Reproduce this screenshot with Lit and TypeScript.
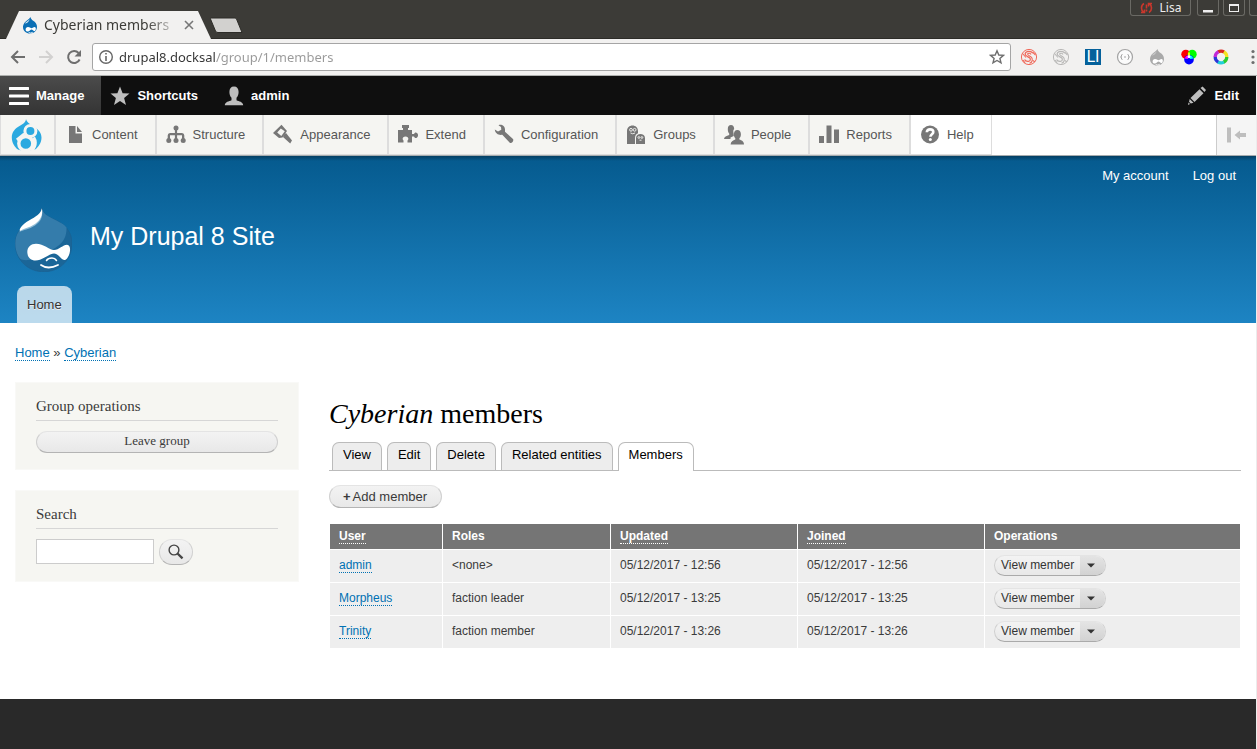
import { LitElement, html, css, svg, nothing } from "lit";
import { customElement, property } from "lit/decorators.js";

const glyph = (w: number, h: number, body: unknown, cls = "") =>
  html`<svg class=${cls} width=${w} height=${h} viewBox="0 0 ${w} ${h}" aria-hidden="true">${body}</svg>`;

const DROP = "M8.4 0C7.6 2 5.6 2.900 4 4.200C2 5.800 1 7.700 1 10C1 13.900 4.200 16.500 8 16.500C12 16.500 15 13.600 15 10C15 7.200 13.500 5.300 11.600 4C10 2.900 8.800 1.800 8.400 0Z";
const GOGGLES = "M3.600 12.400C3.600 11 4.600 10 6 10C7.500 10 8.600 11.200 9.600 11.200C10.600 11.200 11.400 10 12.600 10C13.600 10 14 11 13.800 12.200C13.600 13.400 13 14.200 12.200 14.100C11.200 14 10.600 12.600 9.600 12.600C8.400 12.600 7.400 14.600 5.800 14.600C4.500 14.600 3.600 13.700 3.600 12.400Z";

const favicon = (main: string, top: string) =>
  glyph(16, 17, svg`
    <path d=${DROP} fill=${main} />
    <path d="M7.800 2.200C6.500 3.700 4 4.600 2.900 6.600C4.500 6.500 7 4.900 7.800 2.200Z" fill=${top} />
    <path d=${GOGGLES} fill="#fff" />
    <path d="M6.600 15.400Q8.600 16.600 10.800 15.300" stroke="#fff" stroke-width=".8" fill="none" />`);

const trayIcons: Record<string, unknown> = {
  content: svg`<path d="M4 2H10.500V9.500H17V19H4Z M12 2L17 8H12Z" />`,
  structure: svg`
    <path d="M8.900 5H11.100V9H16Q18.300 9 18.300 11.500V15H16V11.300H11.100V15H8.900V11.300H4V15H1.700V11.500Q1.700 9 4 9H8.900Z" />
    <circle cx="10" cy="4" r="2.500" /><circle cx="2.800" cy="16.600" r="2.500" />
    <circle cx="10" cy="16.600" r="2.500" /><circle cx="17.200" cy="16.600" r="2.500" />`,
  appearance: svg`
    <path fill-rule="evenodd" d="M0 9L8.500 .800L14 7L9.500 13.500L6 14ZM4.200 8.600L8.300 12L11.800 7.300L7.800 4.400Z" />
    <path d="M11 10.500L13 9L19 16.500L17.200 19.500L10 13Z" />`,
  extend: svg`<path d="M0 6H5V4H4V1H11V4H10V6H14V10H16C16.500 8.500 18 8 19 9C20.400 10 20.400 12.500 19 13.500C18 14.500 16.500 14 16 12.500H14V18.500H9.500V16.500C11 15.500 10.600 12.500 7.500 12.500C4.400 12.500 4 15.500 5.500 16.500V18.500H0Z" />`,
  configuration: svg`<path d="M4.500 1.200C7.500 0 11 2 11 5.500V7.800L19 15C20 16.500 18.500 19.500 16 19L8.300 10.800C5 11.500 1.200 9.800 .800 5.500L4 7.600L7.300 5.800L7 3Z" />`,
  groups: svg`
    <path d="M1 20V7C1 3.500 3.500 1.400 6.500 1.400S12 3.500 12 7V9.300C10 10 9 12 9 14V20Z" />
    <path d="M10 20V14C10 11.500 12 10 14.400 10S19 11.500 19 14V20Z" />
    <g fill="none" stroke="#f5f5f2" stroke-width=".9"><circle cx="5" cy="5.800" r="1.400" /><circle cx="8.600" cy="5.800" r="1.400" /><path d="M4.500 9Q6.800 10.600 9 9" /><circle cx="12.900" cy="13.500" r=".9" /><circle cx="15.900" cy="13.500" r=".9" /><path d="M13.500 16.200H15.500" /></g>`,
  people: svg`
    <path d="M3.800 5C3.800 2.500 5 1 7 1S10 2.500 10.200 5C9.300 5.800 9 7 9.600 9.500L9.800 12L6.500 13.500V15H0C.200 12.700 2.500 12 5.200 11V9.500C4.300 8.500 3.800 7 3.800 5Z" />
    <path d="M9.900 10.200C9.900 7.500 11.300 6 13.400 6S16.900 7.500 16.900 10.200C16.900 12 16.300 13.400 15.400 14.200V15.500C17.500 16.500 20 17 20 20.500H6.600C6.800 17.500 9 16.500 11.300 15.500V14.200C10.400 13.400 9.900 12 9.900 10.200Z" />`,
  reports: svg`<path d="M0 12H5V19H0ZM7.500 1.500H12.500V19H7.500ZM15 5.500H20V19H15Z" />`,
  help: svg`
    <circle cx="10" cy="10.500" r="9" />
    <path d="M6.800 8.300C6.800 6.300 8.200 5.400 10 5.400C12 5.400 13.300 6.500 13.300 8.100C13.300 10.300 10.500 10.300 10.400 12.800" fill="none" stroke="#fff" stroke-width="2.600" />
    <circle cx="10.300" cy="15.600" r="1.500" fill="#fff" />`,
};

const cycle = (color: string) => glyph(18, 18, svg`
  <g fill="none" stroke=${color}>
    <circle cx="9" cy="9" r="7.600" stroke-width="1" />
    <path d="M12.800 5.200C11.500 2.700 6 2.600 5.200 5.500C4.600 8 8 8.600 9.500 9.800C11 11 10.500 13 8.500 13.300C6.500 13.500 5 12.600 4.600 11.500" stroke-width="1.200" />
    <path d="M11 6.500C10.500 5 8 4.800 7.600 6C7.300 7.200 9 7.700 10.800 8.800C13.200 10.500 12.800 14.500 9.500 15.300M2.500 5.500L6 9.500M3 12L5 15M12.500 4L15.500 7M13 12.500L15 14" stroke-width="1.100" />
  </g>`);

const extensions: Array<[string, unknown]> = [
  ["Script blocker", cycle("#f0695a")],
  ["Script blocker, inactive", cycle("#b9b8b7")],
  ["LI", html`<span class="li">LI</span>`],
  ["Brackets", glyph(18, 18, svg`
    <circle cx="9" cy="9" r="7.500" fill="#fbfbfb" stroke="#a3a3a3" stroke-width="1.200" />
    <path d="M6.500 6.500Q5 6.500 5.500 8Q5.500 9 4.500 9Q5.500 9 5.500 10Q5 11.500 6.500 11.500M11.500 6.500Q13 6.500 12.500 8Q12.500 9 13.500 9Q12.500 9 12.500 10Q13 11.500 11.500 11.500M8 9H10" fill="none" stroke="#a3a3a3" />`)],
  ["Drupal", favicon("#a9a9a9", "#c9c9c9")],
  ["Colours", glyph(16, 16, svg`
    <circle cx="4.800" cy="5.300" r="4.500" fill="#f00" /><circle cx="11.200" cy="5.300" r="4.500" fill="#0f0" />
    <circle cx="8" cy="10.700" r="4.800" fill="#00f" />
    <path d="M8 2.600Q9.400 4.500 9 6.400L8 7L6.900 6.400Q6.700 4.300 8 2.600Z" fill="#ff0" />
    <path d="M3.600 9.400Q5 6.300 7 6.500L8 8.400L6.600 9.900Z" fill="#f0f" />
    <path d="M12.400 9.400Q11 6.300 9 6.500L8 8.400L9.400 9.900Z" fill="#0ff" /><circle cx="8" cy="7.700" r="1.400" fill="#fff" />`)],
  ["Colour wheel", glyph(16, 16, svg`
    <g fill="none" stroke-width="3.200" stroke-dasharray="6.200 60">
      <circle cx="8" cy="8" r="5.800" stroke="#d9281e" transform="rotate(-120 8 8)" />
      <circle cx="8" cy="8" r="5.800" stroke="#f4e320" transform="rotate(-60 8 8)" />
      <circle cx="8" cy="8" r="5.800" stroke="#2ecc2e" transform="rotate(0 8 8)" />
      <circle cx="8" cy="8" r="5.800" stroke="#20cfd8" transform="rotate(60 8 8)" />
      <circle cx="8" cy="8" r="5.800" stroke="#2b35d8" transform="rotate(120 8 8)" />
      <circle cx="8" cy="8" r="5.800" stroke="#c229d6" transform="rotate(180 8 8)" />
    </g>`)],
];

@customElement("browser-chrome")
export class BrowserChrome extends LitElement {
  @property() title = "";
  @property() url = "";

  static styles = css`
    :host { display: block; font: 15px/20px "Noto Sans", "Open Sans", sans-serif; }
    button { font: inherit; margin: 0; padding: 0; border: 0; background: none; display: flex; align-items: center; justify-content: center; }
    svg { display: block; flex: none; }
    .titlebar { display: flex; align-items: flex-end; height: 38px; background: #3c3b37; border-bottom: 1px solid #2d2c28; }
    .tab { display: flex; align-items: center; box-sizing: border-box; width: 205px; height: 28px; margin: 0 0 -1px 6px; padding: 0 16px 0 16px; background: #f2f1f0; clip-path: polygon(0 100%, 13px 0, calc(100% - 13px) 0, 100% 100%); }
    .label { flex: 1; margin-left: 6px; font-size: 14px; white-space: nowrap; color: #3c3b37; mask-image: linear-gradient(90deg, #000 80%, rgba(0, 0, 0, .25)); }
    .close { width: 12px; margin-left: 11px; }
    .newtab { margin: 0 0 4px -2px; }
    .windows { display: flex; align-self: flex-start; margin-left: auto; height: 16px; color: #eee; }
    .windows button { box-sizing: border-box; border: 1px solid #6a6964; border-top: 0; border-radius: 0 0 3px 3px; width: 22px; margin-right: 4px; color: inherit; }
    .windows .user { width: 61px; gap: 7px; margin-right: 6px; font-size: 12px; line-height: 15px; }
    .windows .edge { width: 8px; margin: 0; border-right: 0; border-radius: 0 0 0 3px; }
    .toolbar { display: flex; align-items: center; height: 36px; background: #f2f1f0; border-bottom: 1px solid #aeb0ae; }
    .nav { display: flex; gap: 8px; padding: 0 8px; }
    .nav button { width: 20px; }
    .omnibox { flex: 1; display: flex; align-items: center; box-sizing: border-box; height: 28px; padding: 0 5px; background: #fff; border: 1px solid #a5a5a5; border-radius: 3px; }
    .omnibox input { flex: 1; min-width: 0; border: 0; padding: 0; margin-left: 5px; outline: 0; font: inherit; font-size: 13px; color: #555; background: linear-gradient(90deg, #333 97px, #999 97px); background-clip: text; -webkit-text-fill-color: transparent; }
    .extensions { display: flex; padding-left: 2px; }
    .extensions button { width: 32px; height: 28px; }
    .extensions .menu { width: 20px; justify-content: flex-end; }
    .li { width: 16px; height: 16px; font: 15px/16px "DejaVu Sans", sans-serif; color: #fff; background: #05619b; }
  `;

  render() {
    return html`
      <div class="titlebar">
        <div class="tab">
          ${favicon("#0a6fb5", "#d5e6f2")}
          <span class="label">${this.title}</span>
          <button class="close" aria-label="Close tab">${glyph(10, 10, svg`<path d="M1 1L9 9M9 1L1 9" stroke="#777" stroke-width="1.600" />`)}</button>
        </div>
        <button class="newtab" aria-label="New tab">${glyph(34, 17, svg`<path d="M2 1H26Q27 1 27.500 2L33 15.500H9Q7 15.500 6.500 14L1.500 2Q1 1 2 1Z" fill="#d2d1cf" stroke="#2d2c28" />`)}</button>
        <div class="windows">
          <button class="user">${glyph(13, 12, svg`<g fill="none" stroke="#c9372c" stroke-width="1.600"><path d="M4 1.500Q1.500 3 1.500 6T3.500 10M9 1.500Q11.500 3 11.500 6T9 10.500M1 10.500H4.500V7.500M12 1.500H8.500V4.500" /><path d="M6.500 2.500V6.500M6.500 7.500V9.500" /></g>`)}<span>Lisa</span></button>
          <button aria-label="Minimize">${glyph(10, 12, svg`<path d="M0 8H10V10.500H0Z" fill="#eee" />`)}</button>
          <button aria-label="Maximize">${glyph(10, 10, svg`<path fill-rule="evenodd" d="M0 1H10V9H0ZM1 3V8H9V3Z" fill="#eee" />`)}</button>
          <button class="edge" aria-label="Close"></button>
        </div>
      </div>
      <div class="toolbar">
        <div class="nav">
          <button aria-label="Back">${glyph(16, 16, svg`<path d="M15 8H2M8 2L2 8L8 14" fill="none" stroke="#6e6e6e" stroke-width="2" />`)}</button>
          <button aria-label="Forward">${glyph(16, 16, svg`<path d="M1 8H14M8 2L14 8L8 14" fill="none" stroke="#d2d1d0" stroke-width="2" />`)}</button>
          <button aria-label="Reload">${glyph(16, 16, svg`<path d="M13.600 10.500A6 6 0 1 1 12.600 4" fill="none" stroke="#6e6e6e" stroke-width="2" /><path d="M15 1V7.500H8.500Z" fill="#6e6e6e" />`)}</button>
        </div>
        <div class="omnibox">
          ${glyph(16, 16, svg`<circle cx="8" cy="8" r="6.300" fill="none" stroke="#666" stroke-width="1.400" /><path d="M7.200 4H8.800V5.600H7.200ZM7.200 7H8.800V12H7.200Z" fill="#666" />`)}
          <input type="text" aria-label="Address" .value=${this.url} />
          <button aria-label="Bookmark">${glyph(16, 16, svg`<path d="M8 1.800L9.800 6L14.400 6.400L10.900 9.400L12 13.900L8 11.500L4 13.900L5.100 9.400L1.600 6.400L6.200 6Z" fill="none" stroke="#6e6e6e" stroke-width="1.400" />`)}</button>
        </div>
        <div class="extensions">
          ${extensions.map(([name, icon]) => html`<button aria-label=${name}>${icon}</button>`)}
          <button class="menu" aria-label="Menu">${glyph(8, 16, svg`<g fill="#6e6e6e"><circle cx="4" cy="2.500" r="1.600" /><circle cx="4" cy="8" r="1.600" /><circle cx="4" cy="13.500" r="1.600" /></g>`)}</button>
        </div>
      </div>`;
  }
}

@customElement("admin-toolbar")
export class AdminToolbar extends LitElement {
  static styles = css`
    :host { display: block; font: 13px/20px "Liberation Sans", Arial, sans-serif; }
    svg { display: block; flex: none; }
    a, button { font: inherit; text-decoration: none; margin: 0; border: 0; }
    .bar { display: flex; height: 39px; background: #0f0f0f; }
    .bar button { display: flex; align-items: center; gap: 7px; padding: 0 17px 0 9px; color: #fff; font-weight: bold; background: none; }
    .bar .open { background: linear-gradient(#4b4b4b, #343434); }
    .bar .edit { margin-left: auto; }
    .tray { display: flex; height: 40px; background: #fff; border-bottom: 1px solid #a5abae; }
    .tray a { display: flex; align-items: center; box-sizing: border-box; height: 40px; gap: 7px; padding: 0 17px 0 9px; color: #565656; fill: #777; background: #f5f5f2; border: solid #ddd; border-width: 0 1px 1px; }
    .tray .home { padding: 0 10px; }
    .tray .last { background: #fff; }
    .tray button { display: flex; align-items: center; margin-left: auto; width: 40px; padding: 0 0 0 9px; background: #f5f5f5; border-left: 1px solid #ccc; }
  `;

  render() {
    const items = ["Content", "Structure", "Appearance", "Extend", "Configuration", "Groups", "People", "Reports", "Help"];
    return html`
      <div class="bar">
        <button class="open">${glyph(20, 20, svg`<path d="M1 2.500H19M1 10H19M1 17.500H19" stroke="#fff" stroke-width="3.200" stroke-linecap="round" />`)}Manage</button>
        <button>${glyph(20, 20, svg`<path d="M10 .500L12.600 7.200L19.500 7.500L14.100 11.900L16 19L10 15L4 19L5.900 11.900L.500 7.500L7.400 7.200Z" fill="#bebebe" />`)}Shortcuts</button>
        <button>${glyph(20, 20, svg`<path d="M5.400 6C5.400 2.500 7 .500 10 .500S14.600 2.500 14.600 6C14.600 8.500 13.800 10.500 12.500 11.800V14.200C15 15.500 19 15.500 19.200 19.300H.800C1 15.500 5 15.500 7.500 14.200V11.800C6.200 10.500 5.400 8.500 5.400 6Z" fill="#bebebe" />`)}admin</button>
        <button class="edit">${glyph(20, 20, svg`<g fill="#bebebe"><path d="M13.500 2L15.600 .600L19 4L17.500 6ZM3.500 12L12.500 3.200L16.500 7.200L7.500 16ZM2.700 13L6.500 16.700L3.800 17.500L2 15.700Z" /><path d="M1.500 16.500L3 18L1 19Z" /></g>`)}Edit</button>
      </div>
      <nav class="tray">
        <a class="home" href="#" aria-label="Home">${glyph(33, 34, svg`
          <path d="M15 1C15.500 4 19 6 22 8C27 11 30.500 14.500 30.500 19.500C30.500 25 27 29.500 24 31.500C21 33 9 33 7 31.500C4 29.500 .800 25 .800 19.500C.800 14 4 10.500 8.500 8C12 6 15 4 15 1Z" fill="#2ba9e0" />
          <g fill="none" stroke="#f5f5f2"><circle cx="19.400" cy="13" r="5.500" stroke-width="3" /><circle cx="14.800" cy="25.500" r="7" stroke-width="3.400" /><path d="M13.500 16L6 22M22.500 19.500Q26.500 26 20.500 33" stroke-width="3.400" /></g>`)}</a>
        ${items.map((name) => html`<a href="#" class=${name === "Help" ? "last" : nothing}>${glyph(20, 21, trayIcons[name.toLowerCase()])}${name}</a>`)}
        <button aria-label="Vertical orientation">${glyph(22, 18, svg`<path d="M1 1.500H5V16.500H1ZM8.500 9L14 4.500V7H20V11H14V13.500Z" fill="#bebebe" />`)}</button>
      </nav>`;
  }
}

interface Member { name: string; role: string; updated: string; joined: string; }

const members: Member[] = [
  { name: "admin", role: "<none>", updated: "05/12/2017 - 12:56", joined: "05/12/2017 - 12:56" },
  { name: "Morpheus", role: "faction leader", updated: "05/12/2017 - 13:25", joined: "05/12/2017 - 13:25" },
  { name: "Trinity", role: "faction member", updated: "05/12/2017 - 13:26", joined: "05/12/2017 - 13:26" },
];

@customElement("group-members")
export class GroupMembers extends LitElement {
  @property({ attribute: false }) members: Member[] = [];

  static styles = css`
    :host { display: block; min-width: 0; padding-top: 15px; }
    a { color: #0071b3; text-decoration: none; }
    h1 { margin: 0 0 11px; font: 28px/34px "Liberation Serif", Georgia, serif; color: #000; }
    .tabs { display: flex; align-items: flex-start; gap: 5px; margin: 0 0 14px; padding: 0 3px; list-style: none; height: 28px; border-bottom: 1px solid #bbb; }
    .tabs a { display: block; padding: 0 10px 4px; line-height: 23px; color: #000; background: #ededed; border: 1px solid #bbb; border-bottom: 0; border-radius: 7px 7px 0 0; }
    .tabs .active { background: #fff; padding-bottom: 5px; }
    .add { display: inline-block; box-sizing: border-box; height: 23px; padding: 0 14px 0 13px; line-height: 21px; color: #3a3a3a; background: linear-gradient(#f3f3f3, #e8e8e8); border: 1px solid #d0d0d0; border-top-color: #e4e4e4; border-bottom-color: #b4b4b4; border-radius: 12px; }
    .add b { margin-right: 2px; }
    table { width: 100%; margin-top: 15px; table-layout: fixed; border-collapse: separate; border-spacing: 1px; font-size: 12px; line-height: 20px; }
    .c-user { width: 112px; }
    .c-roles { width: 167px; }
    .c-date { width: 186px; }
    th { padding: 2px 9px 3px; text-align: left; color: #fff; background: #757575; }
    td { padding: 5px 9px 6px; vertical-align: top; color: #3b3b3b; background: #eee; }
    td a, th a { border-bottom: 1px dotted; }
    th a { color: #fff; }
    .drop { display: inline-flex; box-sizing: border-box; height: 21px; vertical-align: top; overflow: hidden; background: linear-gradient(#f3f3f3, #e8e8e8); border: 1px solid #cfcfcf; border-top-color: #e4e4e4; border-bottom-color: #aaa; border-radius: 11px; }
    .drop a { border: 0; padding: 0 6px; line-height: 19px; color: #333; }
    .drop button { width: 25px; margin: 0; border: 0; padding: 0 0 0 7px; background: linear-gradient(#e4e4e4, #d2d2d2); }
    .drop svg { display: block; }
  `;

  render() {
    const tabs = ["View", "Edit", "Delete", "Related entities", "Members"];
    return html`
      <h1><em>Cyberian</em> members</h1>
      <ul class="tabs">${tabs.map((t) => html`<li><a href="#" class=${t === "Members" ? "active" : nothing}>${t}</a></li>`)}</ul>
      <a class="add" href="#"><b>+</b>Add member</a>
      <table>
        <colgroup><col class="c-user" /><col class="c-roles" /><col class="c-date" /><col class="c-date" /><col /></colgroup>
        <thead><tr><th><a href="#">User</a></th><th>Roles</th><th><a href="#">Updated</a></th><th><a href="#">Joined</a></th><th>Operations</th></tr></thead>
        <tbody>${this.members.map((m) => html`<tr>
          <td><a href="#">${m.name}</a></td><td>${m.role}</td><td>${m.updated}</td><td>${m.joined}</td>
          <td><div class="drop"><a href="#">View member</a><button aria-label="List additional actions">${glyph(8, 5, svg`<path d="M0 .500H8L4 4.500Z" fill="#333" />`)}</button></div></td>
        </tr>`)}</tbody>
      </table>`;
  }
}

@customElement("app-root")
export class AppRoot extends LitElement {
  static styles = css`
    :host { display: flex; flex-direction: column; min-height: 100vh; background: #fff; font: 13px/20px "Liberation Sans", Arial, sans-serif; color: #3b3b3b; }
    a { text-decoration: none; }
    .page { flex: 1; display: flex; flex-direction: column; border-right: 1px solid #ececec; }
    header { background: linear-gradient(rgba(0, 0, 0, .3), rgba(0, 0, 0, 0) 5px), linear-gradient(#055a8e, #1d84c3); }
    .account { display: flex; justify-content: flex-end; gap: 24px; padding: 10px 20px 22px; }
    .account a { color: #fff; }
    .brand { display: flex; align-items: center; gap: 18px; padding: 0 15px; }
    .brand svg { display: block; }
    .brand a { padding-bottom: 8px; font-size: 25px; line-height: 30px; color: #fff; }
    .menu { display: flex; padding: 14px 17px 0; }
    .menu a { padding: 0 10px; line-height: 37px; color: #333; text-shadow: 0 1px #eee; background: rgba(255, 255, 255, .7); border-radius: 8px 8px 0 0; }
    .body { padding: 20px 15px 50px; }
    .crumbs { padding-bottom: 19px; }
    .crumbs a { color: #0071b3; border-bottom: 1px dotted; }
    .columns { display: grid; grid-template-columns: 284px minmax(0, 1fr); gap: 30px; align-items: start; }
    aside { display: grid; gap: 20px; }
    section { padding: 13px 20px 16px; background: #f6f6f2; border: 1px solid #f9f9f7; }
    h2 { margin: 0 0 10px; padding-bottom: 4px; font: 15px/20px "Liberation Serif", Georgia, serif; color: #3b3b3b; border-bottom: 1px solid #d6d6d6; }
    section button { margin: 0; padding: 0; color: #3a3a3a; background: linear-gradient(#f3f3f3, #e8e8e8); border: 1px solid #d0d0d0; border-top-color: #e4e4e4; border-bottom-color: #b4b4b4; border-radius: 13px; }
    .leave { display: block; width: 100%; height: 22px; padding-bottom: 2px; font: 13px/18px "Liberation Serif", Georgia, serif; }
    form { display: flex; gap: 5px; }
    form input { box-sizing: border-box; width: 118px; height: 25px; margin: 0; padding: 4px; border: 1px solid #ccc; background: #fff; }
    form button { width: 34px; height: 26px; display: grid; place-items: center; }
    footer { flex: 1; min-height: 50px; background: #292929; }
  `;

  render() {
    return html`
      <browser-chrome .title=${"Cyberian members"} .url=${"drupal8.docksal/group/1/members"}></browser-chrome>
      <div class="page">
        <admin-toolbar></admin-toolbar>
        <header>
          <nav class="account"><a href="#">My account</a><a href="#">Log out</a></nav>
          <div class="brand">
            ${glyph(57, 64, svg`
              <path d="M27 .300C26.500 6 21 9 14 13.500C5 19.500 .300 26.500 .300 35.500C.300 52 13 63.800 28.700 63.800C45 63.800 57 51.500 57 35.500C57 25 51.500 18.500 45 14.500C37 9.500 28 8 27 .300Z" fill="#1b6698" stroke="#1d5f8e" stroke-width=".6" />
              <path d="M27 .300C26.500 6 21 9 14 13.500C5 19.500 .300 26.500 .300 35.500C.300 42 2.500 48 5.500 51C10 53.500 20 52 29 46C40 40 52 36 51.500 19.500C49 16.500 47 15.500 45 14.500C37 9.500 28 8 27 .300Z" fill="#347cab" />
              <path d="M27 3C28 9 25.500 14 20 17.500C14 21.500 8 22 4.500 24C8 16 14 13.500 18 11C23 8 26 6 27 3Z" fill="#8fbcd6" />
              <path d="M26.800 .300C28.500 7 25 12.500 20 16C14 20 8 20.500 5 23C3.500 21 8 16 14 12.500C21 8.500 26 6 26.800 .300Z" fill="#fff" />
              <path d="M12.300 44C12.300 39 16 35.800 21 35.800C29 35.800 34 42 39 42C44 42 48 36.800 52 36.800C55.500 36.800 55.500 42 54.500 45.500C53.500 49 51.500 52 49.500 52C46 52 43.500 45.500 39 45.500C34 45.500 28 52.500 20.500 52.500C15.500 52.500 12.300 49 12.300 44Z" fill="#fff" />
              <path d="M26 57Q33 62 43 57" fill="none" stroke="#fff" stroke-width="1.800" stroke-linecap="round" />
              <path d="M31.500 52.500Q33 50 37 50Q40 50 41.500 52.500" fill="none" stroke="#fff" stroke-width="1.500" stroke-linecap="round" />`)}
            <a href="#">My Drupal 8 Site</a>
          </div>
          <nav class="menu"><a href="#">Home</a></nav>
        </header>
        <div class="body">
          <nav class="crumbs"><a href="#">Home</a> » <a href="#">Cyberian</a></nav>
          <div class="columns">
            <aside>
              <section><h2>Group operations</h2><button class="leave">Leave group</button></section>
              <section>
                <h2>Search</h2>
                <form @submit=${(e: Event) => e.preventDefault()}>
                  <input type="search" aria-label="Search" />
                  <button aria-label="Search">${glyph(16, 16, svg`<circle cx="6" cy="6" r="4.900" fill="none" stroke="#454545" stroke-width="1.400" /><path d="M9.500 9.500L14.500 14.300" stroke="#454545" stroke-width="2.400" />`)}</button>
                </form>
              </section>
            </aside>
            <group-members .members=${members}></group-members>
          </div>
        </div>
        <footer></footer>
      </div>`;
  }
}
